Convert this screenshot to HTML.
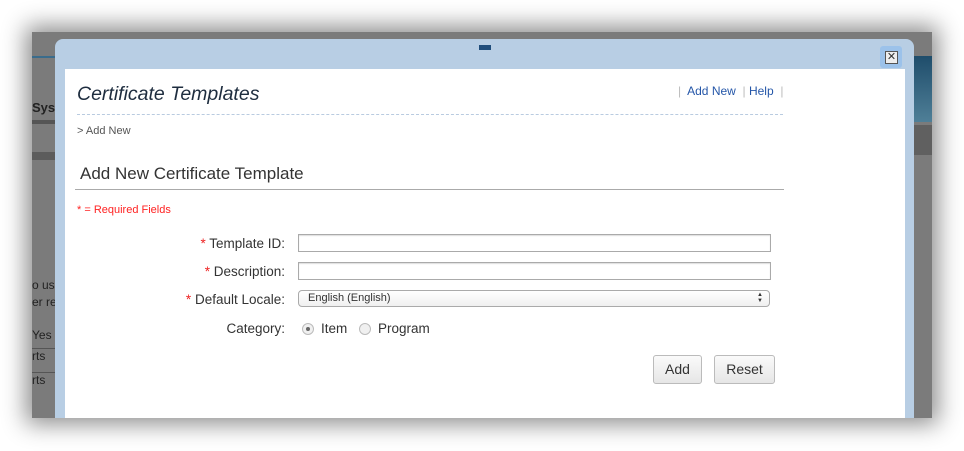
<!DOCTYPE html>
<html><head><style>
body{margin:0;width:964px;height:451px;background:#fff;position:relative;overflow:hidden;font-family:"Liberation Sans",Arial,sans-serif;}
.abs{position:absolute}
.bg{left:32px;top:32px;width:900px;height:386px;background:#7b7b7b;box-shadow:0 0 22px 6px rgba(0,0,0,.45)}
.modal{left:55px;top:39px;width:859px;height:379px;background:#b8cee4;border-radius:8px 8px 0 0}
.content{left:65px;top:69px;width:840px;height:349px;background:#fff}
.t{color:#333;font-size:13.5px}
.in{border:1px solid #aaa;background:#fff;height:16px;box-shadow:inset 0 1px 1px #ddd}
.btn{border:1px solid #bbb;border-radius:3px;background:linear-gradient(#fafafa,#e6e6e6);font-size:14px;color:#333;text-align:center;line-height:27px;height:27px}
.req{color:#e22}
.radio{width:10px;height:10px;border:1px solid #bbb;border-radius:50%;background:#f0f0f0}
</style></head><body>
<div class="abs bg"></div>
<div class="abs" style="left:32px;top:56px;width:23px;height:2px;background:#3a6c8c"></div>
<div class="abs" style="left:32px;top:100px;font-size:13px;font-weight:bold;color:#222">Sys</div>
<div class="abs" style="left:32px;top:120px;width:23px;height:4px;background:#555"></div>
<div class="abs" style="left:32px;top:152px;width:23px;height:8px;background:#5c5c5c"></div>
<div class="abs" style="left:32px;top:278px;font-size:12px;color:#222">o us</div>
<div class="abs" style="left:32px;top:295px;font-size:12px;color:#222">er re</div>
<div class="abs" style="left:32px;top:328px;font-size:12px;color:#222">Yes</div>
<div class="abs" style="left:32px;top:348px;font-size:12px;color:#222;border-top:1px solid #555;width:23px">rts</div>
<div class="abs" style="left:32px;top:372px;font-size:12px;color:#222;border-top:1px solid #555;width:23px">rts</div>
<div class="abs" style="left:914px;top:56px;width:18px;height:66px;background:linear-gradient(#1f4d6b,#4f7f97)"></div>
<div class="abs" style="left:914px;top:125px;width:18px;height:30px;background:#606060"></div>
<div class="abs modal"></div>
<div class="abs" style="left:479px;top:45px;width:12px;height:5px;background:#1f4d7b"></div>
<div class="abs" style="left:880px;top:46px;width:22px;height:22px;background:#9cc2ea;border-radius:3px"></div>
<div class="abs" style="left:885px;top:51px;width:11px;height:11px;border:1px solid #555;background:#eee;font-size:11px;line-height:11px;text-align:center;color:#333">✕</div>
<div class="abs content"></div>
<div class="abs" style="left:77px;top:83px;font-size:19.5px;font-style:italic;color:#1e2d3f">Certificate Templates</div>
<div class="abs" style="left:678px;top:84px;font-size:12px;color:#2456a8"><span style="color:#bbb">|</span>&nbsp; Add New &nbsp;<span style="color:#bbb">|</span> Help &nbsp;<span style="color:#bbb">|</span></div>
<div class="abs" style="left:77px;top:114px;width:706px;border-top:1px dashed #b9cbe0"></div>
<div class="abs" style="left:77px;top:125px;font-size:11px;color:#555">&gt; Add New</div>
<div class="abs" style="left:80px;top:164px;font-size:17px;color:#333">Add New Certificate Template</div>
<div class="abs" style="left:75px;top:189px;width:709px;height:1px;background:#aaa"></div>
<div class="abs" style="left:77px;top:204px;font-size:11px;color:#f22">* = Required Fields</div>
<div class="abs t" style="right:679px;top:236px"><span class="req">*</span> Template ID:</div>
<div class="abs t" style="right:679px;top:264px"><span class="req">*</span> Description:</div>
<div class="abs t" style="right:679px;top:292px"><span class="req">*</span> Default Locale:</div>
<div class="abs t" style="right:679px;top:321px">Category:</div>
<div class="abs in" style="left:298px;top:234px;width:471px"></div>
<div class="abs in" style="left:298px;top:262px;width:471px"></div>
<div class="abs" style="left:298px;top:290px;width:470px;height:15px;border:1px solid #aaa;border-radius:4px;background:linear-gradient(#fff,#f0f0f0);font-size:11px;color:#333;line-height:15px;text-indent:9px">English (English)<span style="position:absolute;right:6px;top:1px;font-size:6px;line-height:6px;text-indent:0">▲<br>▼</span></div>
<div class="abs radio" style="left:302px;top:323px"><div style="width:4px;height:4px;background:#666;border-radius:50%;margin:3px"></div></div>
<div class="abs t" style="left:321px;top:321px">Item</div>
<div class="abs radio" style="left:359px;top:323px"></div>
<div class="abs t" style="left:378px;top:321px">Program</div>
<div class="abs btn" style="left:653px;top:355px;width:47px">Add</div>
<div class="abs btn" style="left:714px;top:355px;width:59px">Reset</div>
</body></html>
